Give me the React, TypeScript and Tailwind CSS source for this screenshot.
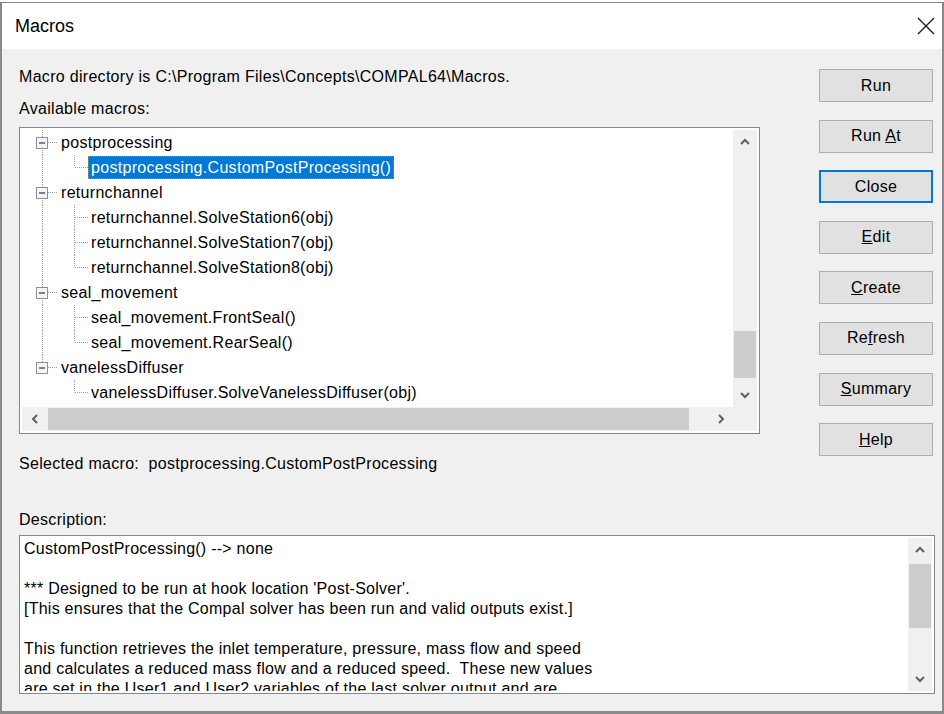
import React from "react"

const font = { fontFamily: '"Liberation Sans", Arial, sans-serif' }

type Row = { text: string; parent?: boolean; lastParent?: boolean; lastChild?: boolean; underParentLast?: boolean; selected?: boolean }

const rows: Row[] = [
  { text: "postprocessing", parent: true },
  { text: "postprocessing.CustomPostProcessing()", lastChild: true, selected: true },
  { text: "returnchannel", parent: true },
  { text: "returnchannel.SolveStation6(obj)" },
  { text: "returnchannel.SolveStation7(obj)" },
  { text: "returnchannel.SolveStation8(obj)", lastChild: true },
  { text: "seal_movement", parent: true },
  { text: "seal_movement.FrontSeal()" },
  { text: "seal_movement.RearSeal()", lastChild: true },
  { text: "vanelessDiffuser", parent: true, lastParent: true },
  { text: "vanelessDiffuser.SolveVanelessDiffuser(obj)", lastChild: true, underParentLast: true },
]

const descLines = [
  "CustomPostProcessing() --> none",
  "",
  "*** Designed to be run at hook location 'Post-Solver'.",
  "[This ensures that the Compal solver has been run and valid outputs exist.]",
  "",
  "This function retrieves the inlet temperature, pressure, mass flow and speed",
  "and calculates a reduced mass flow and a reduced speed.  These new values",
  "are set in the User1 and User2 variables of the last solver output and are",
]

function Chevron({ dir }: { dir: "up" | "down" | "left" | "right" }) {
  const d = {
    up: "M1 6 L5 2 L9 6",
    down: "M1 2 L5 6 L9 2",
    left: "M6 1 L2 5 L6 9",
    right: "M2 1 L6 5 L2 9",
  }[dir]
  const vertical = dir === "up" || dir === "down"
  return (
    <svg width={vertical ? 10 : 8} height={vertical ? 8 : 10} viewBox={vertical ? "0 0 10 8" : "0 0 8 10"}>
      <path d={d} fill="none" stroke="#606060" strokeWidth="2" />
    </svg>
  )
}

function Connector({ row }: { row: Row }) {
  const dot = { stroke: "#a0a0a0", strokeWidth: 1, strokeDasharray: "1 1" }
  if (row.parent) {
    return (
      <svg width="39" height="25" className="shrink-0">
        <line x1="20.5" y1="0" x2="20.5" y2={row.lastParent ? 7 : 25} {...dot} />
        <line x1="26" y1="12.5" x2="36" y2="12.5" {...dot} />
        <rect x="14.5" y="7.5" width="11" height="11" fill="#f4f4f4" stroke="#919191" />
        <line x1="17" y1="13" x2="23" y2="13" stroke="#3f5f9f" strokeWidth="1.5" />
      </svg>
    )
  }
  return (
    <svg width="66" height="25" className="shrink-0">
      {!row.underParentLast && <line x1="20.5" y1="0" x2="20.5" y2="25" {...dot} />}
      <line x1="52.5" y1="0" x2="52.5" y2={row.lastChild ? 12.5 : 25} {...dot} />
      <line x1="53" y1="12.5" x2="66" y2="12.5" {...dot} />
    </svg>
  )
}

function Button({ label, focused }: { label: React.ReactNode; focused?: boolean }) {
  return (
    <div
      className={`flex h-[33px] w-[114px] items-center justify-center bg-[#e1e1e1] text-[16px] tracking-[0.3px] text-black ${
        focused ? "border-2 border-[#0078d7]" : "border border-[#adadad]"
      }`}
    >
      {label}
    </div>
  )
}

export default function App() {
  return (
    <div className="h-[714px] w-[944px] overflow-hidden bg-white pt-[2px]" style={font}>
      <div className="flex h-[712px] flex-col border-x-2 border-t border-b-[3px] border-[#8a8a8a] bg-[#f0f0f0]">
        {/* title bar */}
        <div className="flex h-[46px] shrink-0 items-center justify-between bg-white pl-[13px] pr-[6px]">
          <span className="text-[18px] text-black">Macros</span>
          <svg width="18" height="18" viewBox="0 0 18 18" className="mr-[1px]">
            <path d="M1 1 L17 17 M17 1 L1 17" stroke="#1a1a1a" strokeWidth="1.3" />
          </svg>
        </div>

        <div className="flex flex-col pl-[17px] pr-[7px] pt-[18px] text-[16px] tracking-[0.3px] text-black">
          <div className="flex justify-between">
            {/* left column */}
            <div className="flex w-[741px] flex-col">
              <div className="h-[20px] leading-[20px]">Macro directory is C:\Program Files\Concepts\COMPAL64\Macros.</div>
              <div className="mt-[12px] h-[20px] leading-[20px]">Available macros:</div>

              <div className="mt-[8px] flex h-[307px] flex-col border border-[#828790] bg-white p-[2px]">
                <div className="flex h-[277px]">
                  <div className="flex-1 overflow-hidden">
                    {rows.map((r) => (
                      <div key={r.text} className="flex h-[25px] items-center whitespace-nowrap">
                        <Connector row={r} />
                        {r.selected ? (
                          <span className="border border-dotted border-[#c9833a] bg-[#0078d7] px-[2px] leading-[21px] text-white">
                            {r.text}
                          </span>
                        ) : (
                          <span className={r.parent ? "" : "pl-[3px]"}>{r.text}</span>
                        )}
                      </div>
                    ))}
                  </div>
                  {/* vertical scrollbar */}
                  <div className="flex w-[24px] flex-col items-center bg-[#f0f0f0]">
                    <div className="flex h-[24px] items-center justify-center">
                      <Chevron dir="up" />
                    </div>
                    <div className="flex-1 self-stretch px-[1px]">
                      <div className="mt-[177px] h-[47px] bg-[#cdcdcd]" />
                    </div>
                    <div className="flex h-[24px] items-center justify-center">
                      <Chevron dir="down" />
                    </div>
                  </div>
                </div>
                {/* horizontal scrollbar */}
                <div className="flex h-[24px] bg-[#f0f0f0]">
                  <div className="flex w-[26px] items-center justify-center">
                    <Chevron dir="left" />
                  </div>
                  <div className="my-[1px] w-[641px] bg-[#cdcdcd]" />
                  <div className="flex flex-1 items-center justify-center pl-[20px]">
                    <Chevron dir="right" />
                  </div>
                  <div className="w-[24px]" />
                </div>
              </div>

              <div className="mt-[20px] h-[20px] whitespace-pre leading-[20px]">
                {"Selected macro:  postprocessing.CustomPostProcessing"}
              </div>
            </div>

            {/* buttons */}
            <div className="mr-[2px] mt-[2px] flex w-[114px] flex-col gap-[17.6px]">
              <Button label="Run" />
              <Button label={<span>Run <u>A</u>t</span>} />
              <Button label="Close" focused />
              <Button label={<span><u>E</u>dit</span>} />
              <Button label={<span><u>C</u>reate</span>} />
              <Button label={<span>Re<u>f</u>resh</span>} />
              <Button label={<span><u>S</u>ummary</span>} />
              <Button label={<span><u>H</u>elp</span>} />
            </div>
          </div>

          <div className="mt-[36px] h-[20px] leading-[20px]">Description:</div>
          <div className="mt-[5px] flex h-[159px] border border-[#828790] bg-white p-[2px]">
            <div className="flex-1 overflow-hidden pl-[2px] pt-[1px]">
              {descLines.map((l, i) => (
                <div key={i} className="h-[20px] whitespace-pre text-[16px] leading-[20px] tracking-[0.25px]">
                  {l}
                </div>
              ))}
            </div>
            <div className="flex w-[24px] flex-col items-center bg-[#f0f0f0]">
              <div className="flex h-[24px] items-center justify-center">
                <Chevron dir="up" />
              </div>
              <div className="flex-1 self-stretch px-[1px]">
                <div className="mt-[2px] h-[64px] bg-[#cdcdcd]" />
              </div>
              <div className="flex h-[24px] items-center justify-center">
                <Chevron dir="down" />
              </div>
            </div>
          </div>
        </div>
      </div>
    </div>
  )
}
